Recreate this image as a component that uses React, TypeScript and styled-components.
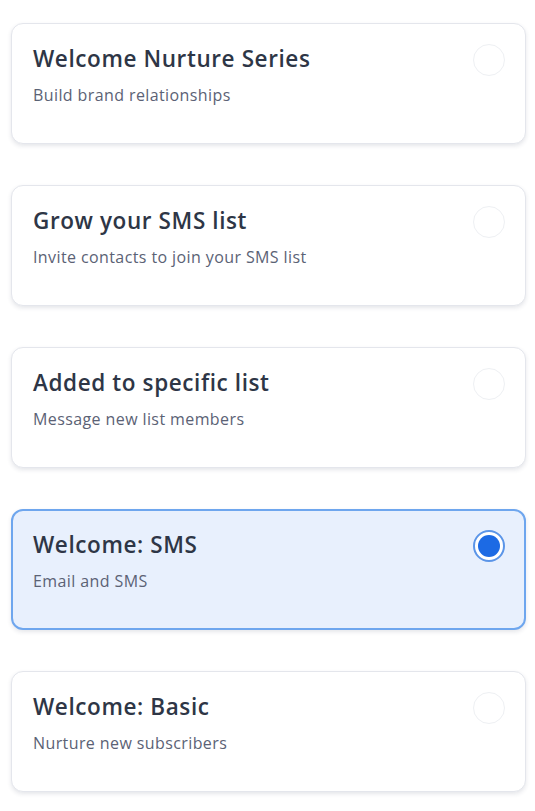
import { useState } from "react";
import styled, { createGlobalStyle } from "styled-components";

const GlobalStyle = createGlobalStyle`
  html, body {
    margin: 0;
    padding: 0;
    background: #ffffff;
  }
  body {
    font-family: "Open Sans", "Noto Sans", "Liberation Sans", sans-serif;
  }
`;

const List = styled.div`
  display: flex;
  flex-direction: column;
  gap: 41px;
  padding: 23px 9px 20px 11px;
`;

const Card = styled.button<{ $selected: boolean }>`
  display: flex;
  justify-content: space-between;
  align-items: flex-start;
  height: 121px;
  box-sizing: border-box;
  padding: ${(p) => (p.$selected ? "19px 19px 0 20px" : "20px 20px 0 21px")};
  border-radius: 12px;
  border: ${(p) => (p.$selected ? "2px solid #6ea6ee" : "1px solid #e4e6ec")};
  background: ${(p) => (p.$selected ? "#e8f0fd" : "#ffffff")};
  box-shadow: 0 2px 4px rgba(40, 50, 80, 0.12);
  text-align: left;
  cursor: pointer;
  font-family: inherit;
`;

const Text = styled.div`
  display: flex;
  flex-direction: column;
  gap: 10px;
`;

const Title = styled.div`
  font-size: 22.5px;
  font-weight: 600;
  letter-spacing: 0.6px;
  color: #2e3646;
  line-height: 30px;
`;

const Subtitle = styled.div`
  font-size: 16px;
  font-weight: 400;
  letter-spacing: 0.4px;
  color: #5b6275;
  line-height: 22px;
`;

const Radio = styled.span<{ $selected: boolean }>`
  flex: none;
  width: 32px;
  height: 32px;
  box-sizing: border-box;
  border-radius: 50%;
  border: ${(p) => (p.$selected ? "2px solid #5b95e8" : "1px solid #eef0f3")};
  background: #ffffff;
  display: flex;
  align-items: center;
  justify-content: center;

  &::after {
    content: "";
    display: ${(p) => (p.$selected ? "block" : "none")};
    width: 22px;
    height: 22px;
    border-radius: 50%;
    background: #1c6ae4;
  }
`;

const items = [
  { title: "Welcome Nurture Series", sub: "Build brand relationships" },
  { title: "Grow your SMS list", sub: "Invite contacts to join your SMS list" },
  { title: "Added to specific list", sub: "Message new list members" },
  { title: "Welcome: SMS", sub: "Email and SMS" },
  { title: "Welcome: Basic", sub: "Nurture new subscribers" },
];

const App = () => {
  const [selected, setSelected] = useState(3);

  return (
    <>
      <GlobalStyle />
      <List>
        {items.map((item, i) => (
          <Card key={item.title} $selected={i === selected} onClick={() => setSelected(i)}>
            <Text>
              <Title>{item.title}</Title>
              <Subtitle>{item.sub}</Subtitle>
            </Text>
            <Radio $selected={i === selected} />
          </Card>
        ))}
      </List>
    </>
  );
};

export default App;
